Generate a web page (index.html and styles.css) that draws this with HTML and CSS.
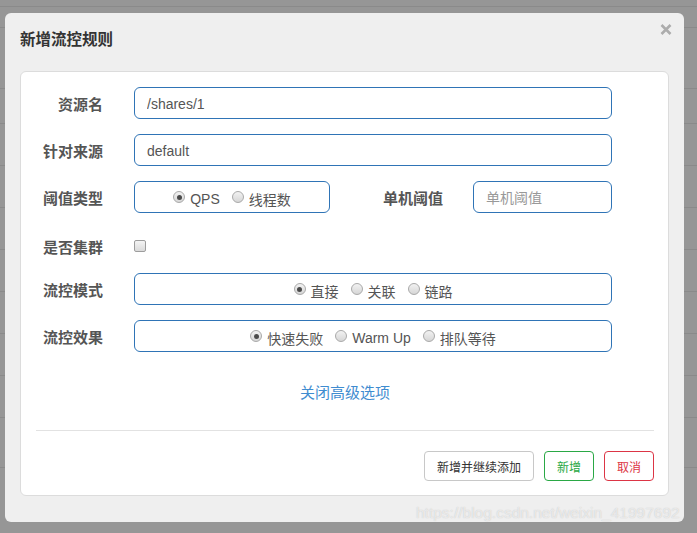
FILE: index.html
```html
<!DOCTYPE html>
<html lang="zh-CN">
<head>
<meta charset="utf-8">
<title>新增流控规则</title>
<link rel="stylesheet" href="styles.css">
</head>
<body>
<div class="page">
  <div class="bg-row r1"></div>
  <div class="bg-row r2"></div>
  <div class="bg-row r3"></div>
  <div class="bg-row r4"></div>
  <div class="bg-row"></div>
  <div class="bg-row"></div>
  <div class="bg-row"></div>
  <div class="bg-row"></div>
  <div class="bg-row"></div>
  <div class="bg-row"></div>
  <div class="bg-row"></div>
  <div class="bg-row r5"></div>
</div>

<div class="modal">
  <div class="modal-header">
    <h4 class="modal-title">新增流控规则</h4>
    <button class="close" type="button" aria-label="关闭">
      <svg width="12" height="11" viewBox="0 0 12 11"><path d="M1.5 1 L10.5 10 M10.5 1 L1.5 10" stroke="#acacac" stroke-width="2.6" fill="none"/></svg>
    </button>
  </div>
  <div class="modal-body">
    <div class="card">
      <div class="form-row">
        <label class="ctl-label">资源名</label>
        <input class="ctl ctl-full" type="text" value="/shares/1">
      </div>
      <div class="form-row">
        <label class="ctl-label">针对来源</label>
        <input class="ctl ctl-full" type="text" value="default">
      </div>
      <div class="form-row">
        <label class="ctl-label">阈值类型</label>
        <div class="ctl radio-box box-small">
          <label class="radio"><input type="radio" name="grade" checked><span>QPS</span></label>
          <label class="radio"><input type="radio" name="grade"><span>线程数</span></label>
        </div>
        <label class="ctl-label label-mid">单机阈值</label>
        <input class="ctl ctl-count" type="text" placeholder="单机阈值">
      </div>
      <div class="form-row row-check">
        <label class="ctl-label">是否集群</label>
        <input class="check" type="checkbox">
      </div>
      <div class="form-row">
        <label class="ctl-label">流控模式</label>
        <div class="ctl radio-box ctl-full">
          <label class="radio"><input type="radio" name="strategy" checked><span>直接</span></label>
          <label class="radio"><input type="radio" name="strategy"><span>关联</span></label>
          <label class="radio"><input type="radio" name="strategy"><span>链路</span></label>
        </div>
      </div>
      <div class="form-row">
        <label class="ctl-label">流控效果</label>
        <div class="ctl radio-box ctl-full">
          <label class="radio"><input type="radio" name="behavior" checked><span>快速失败</span></label>
          <label class="radio"><input type="radio" name="behavior"><span>Warm Up</span></label>
          <label class="radio"><input type="radio" name="behavior"><span>排队等待</span></label>
        </div>
      </div>
      <div class="link-row"><a class="adv-link" href="#">关闭高级选项</a></div>
      <div class="sep"></div>
      <div class="footer">
        <button class="btn btn-default" type="button">新增并继续添加</button>
        <button class="btn btn-success" type="button">新增</button>
        <button class="btn btn-danger" type="button">取消</button>
      </div>
    </div>
  </div>
</div>

<div class="watermark">https://blog.csdn.net/weixin_41997692</div>
</body>
</html>
```

FILE: styles.css
```css
* { box-sizing: border-box; }

html, body {
  margin: 0;
  padding: 0;
  width: 697px;
  height: 533px;
  overflow: hidden;
}

body {
  background: #969696;
  font-family: "Liberation Sans", "Noto Sans CJK SC", sans-serif;
  position: relative;
}

/* backdrop page rows */
.page {
  display: flex;
  flex-direction: column;
}
.bg-row {
  height: 42px;
  border-bottom: 1px solid #8a8a8a;
}
.bg-row.r1 { height: 7px; }
.bg-row.r2 { height: 21px; }
.bg-row.r3 { height: 61px; }
.bg-row.r4 { height: 35px; }
.bg-row.r5 { height: 50px; }

/* modal */
.modal {
  position: absolute;
  left: 5px;
  top: 13px;
  width: 679px;
  height: 509px;
  background: #efefef;
  border-radius: 6px;
}

.modal-header {
  display: flex;
  justify-content: space-between;
  align-items: flex-start;
  height: 58px;
  padding: 17px 12px 0 15px;
}

.modal-title {
  margin: 0;
  font-size: 15.5px;
  line-height: 20px;
  font-weight: bold;
  color: #333;
}

.close {
  border: 0;
  background: transparent;
  padding: 0;
  margin-top: -6px;
  width: 12px;
  height: 11px;
  display: block;
}
.close svg { display: block; }

.modal-body {
  padding: 0 15px;
}

.card {
  width: 649px;
  height: 425px;
  background: #fff;
  border: 1px solid #dcdcdc;
  border-radius: 6px;
  padding: 15px 14px 0 15px;
  display: flex;
  flex-direction: column;
}

.form-row {
  display: flex;
  align-items: center;
  height: 32px;
  margin-bottom: 15px;
}

.ctl-label {
  width: 67px;
  margin-right: 31px;
  text-align: right;
  font-size: 15px;
  font-weight: bold;
  color: #555;
  flex: none;
}

.ctl {
  height: 32px;
  border: 1px solid #2f74b6;
  border-radius: 6px;
  background: #fff;
  font-family: "Liberation Sans", "Noto Sans CJK SC", sans-serif;
  font-size: 14px;
  color: #555;
  padding: 1px 12px 0;
  outline: none;
  flex: none;
}

.ctl-full { width: 478px; }
.box-small { width: 196px; }
.ctl-count { width: 139px; }

.ctl::placeholder { color: #999; }

.label-mid {
  width: 113px;
  margin-right: 30px;
}

.radio-box {
  display: flex;
  align-items: center;
  justify-content: center;
  gap: 12px;
  padding: 0;
}

.radio {
  display: flex;
  align-items: center;
  gap: 5px;
  font-size: 14px;
  color: #555;
}

.radio span {
  padding-top: 3px;
}

.radio input {
  appearance: none;
  -webkit-appearance: none;
  margin: 0;
  width: 12px;
  height: 12px;
  border-radius: 50%;
  border: 1px solid #a9a9a9;
  background: linear-gradient(#f2f2f2, #d6d6d6);
  position: relative;
  flex: none;
}
.radio input:checked::after {
  content: "";
  position: absolute;
  left: 2.5px;
  top: 2.5px;
  width: 5px;
  height: 5px;
  border-radius: 50%;
  background: #4a4a4a;
}

.row-check {
  height: 30px;
  padding-top: 6px;
}

.check {
  appearance: none;
  -webkit-appearance: none;
  margin: 0;
  width: 12px;
  height: 12px;
  border: 1px solid #9d9d9d;
  border-radius: 2px;
  background: linear-gradient(#f4f4f4, #dadada);
}

.link-row {
  margin-top: 16px;
  height: 20px;
  display: flex;
  justify-content: center;
}

.adv-link {
  font-size: 15px;
  line-height: 20px;
  color: #3f8cd0;
  text-decoration: none;
}

.sep {
  margin-top: 27px;
  height: 1px;
  background: #e2e2e2;
}

.footer {
  margin-top: 20px;
  display: flex;
  justify-content: flex-end;
  gap: 10px;
}

.btn {
  height: 30px;
  border-radius: 4px;
  background: #fff;
  font-family: "Liberation Sans", "Noto Sans CJK SC", sans-serif;
  font-size: 12px;
  padding: 0 12px;
  border: 1px solid #c8c8c8;
  color: #333;
}
.btn-default { width: 110px; }
.btn-success {
  width: 50px;
  border-color: #2aa845;
  color: #2aa845;
}
.btn-danger {
  width: 50px;
  border-color: #dc3545;
  color: #dc3545;
}

.watermark {
  position: absolute;
  left: 416px;
  top: 504px;
  font-family: "Liberation Sans", sans-serif;
  font-size: 15.5px;
  color: rgba(255, 255, 255, 0.6);
  text-shadow: 0 0 1px rgba(120, 120, 120, 0.4);
  white-space: nowrap;
}
```
